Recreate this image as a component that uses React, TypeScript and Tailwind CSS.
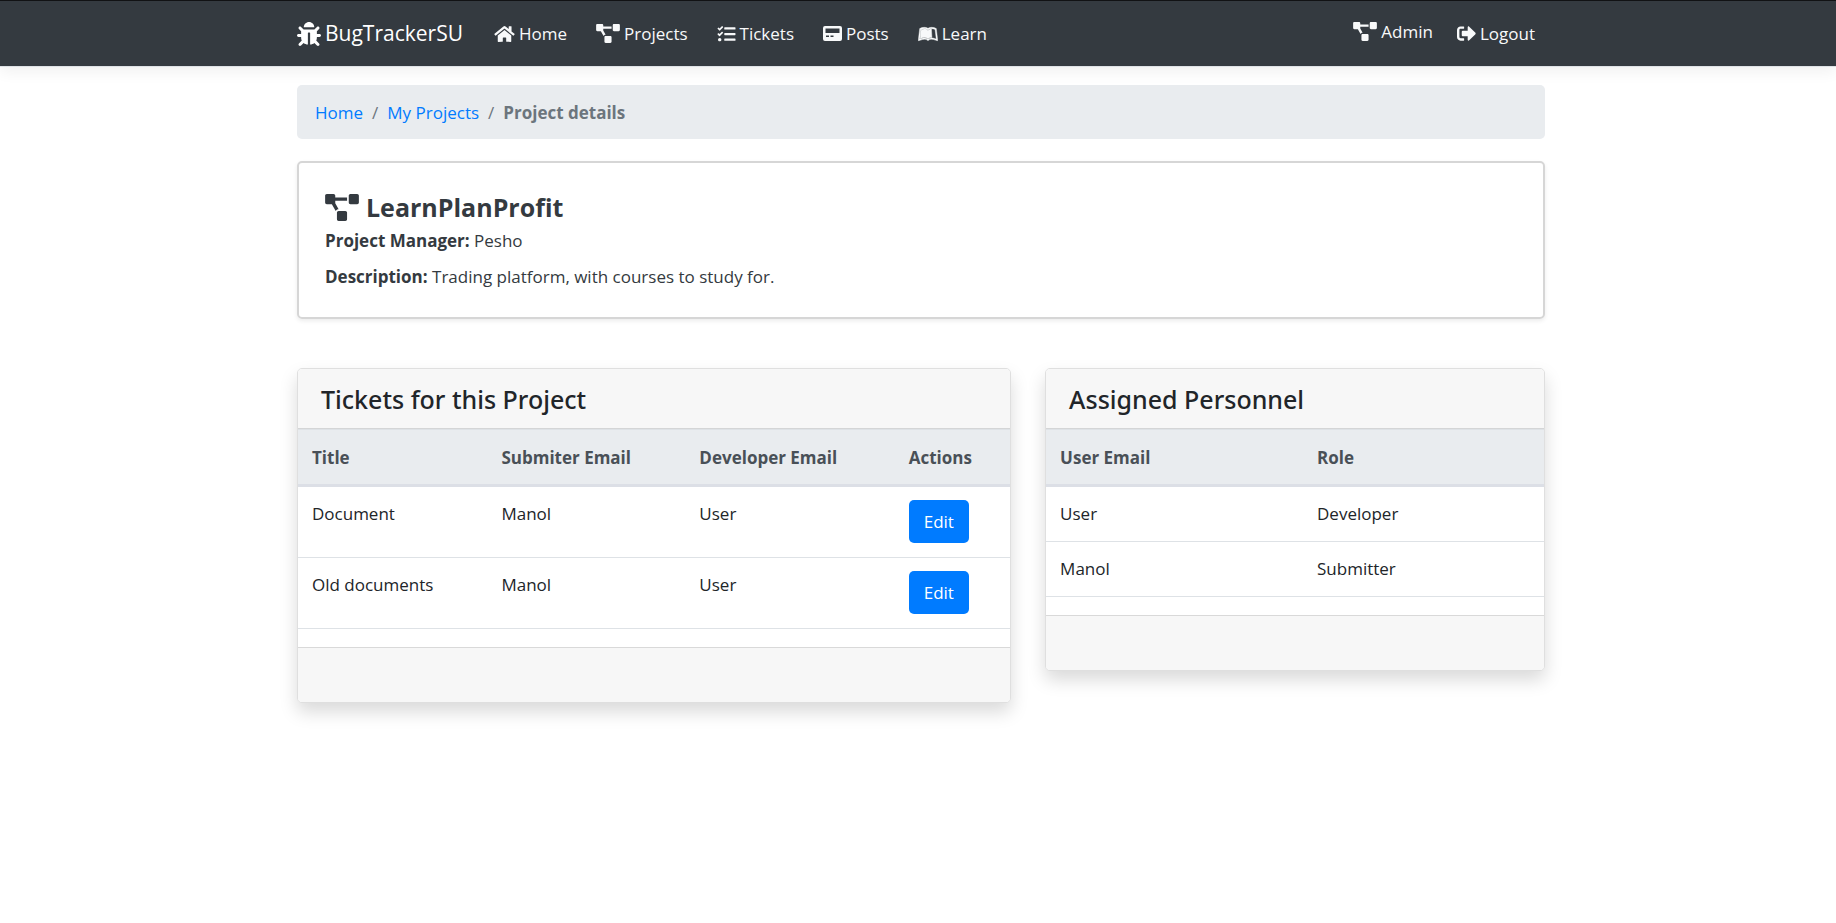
import React from "react";
import { FaBug, FaHome, FaProjectDiagram, FaTasks, FaLeanpub, FaSignOutAlt } from "react-icons/fa";

function PostsIcon() {
  return (
    <svg viewBox="0 0 19 15" className="h-[15px] w-[19px]" fill="currentColor" aria-hidden="true">
      <path
        fillRule="evenodd"
        d="M2 0h15a2 2 0 0 1 2 2v11a2 2 0 0 1-2 2H2a2 2 0 0 1-2-2V2a2 2 0 0 1 2-2zM2.5 2.5v4.5h14V2.5zM3 9.5v1.5h3V9.5zM7.5 9.5v1.5h3V9.5z"
      />
    </svg>
  );
}

const diagram = <FaProjectDiagram viewBox="0 0 640 512" className="h-[19px] w-6" />;

const links = [
  { label: "Home", icon: <FaHome className="h-[18px] w-[21px]" /> },
  { label: "Projects", icon: diagram },
  { label: "Tickets", icon: <FaTasks className="h-[18px] w-[19px]" /> },
  { label: "Posts", icon: <PostsIcon /> },
  { label: "Learn", icon: <FaLeanpub className="h-5 w-5" stroke="currentColor" strokeWidth={12} /> },
];

function NavLink({ label, icon }: { label: string; icon: React.ReactNode }) {
  return (
    <a href="#" className="flex items-center gap-1 text-[#f8f9fa]">
      {icon}
      {label}
    </a>
  );
}

const tickets = [
  { title: "Document", submitter: "Manol", developer: "User" },
  { title: "Old documents", submitter: "Manol", developer: "User" },
];

const personnel = [
  { email: "User", role: "Developer" },
  { email: "Manol", role: "Submitter" },
];

function Card({ title, children }: { title: string; children: React.ReactNode }) {
  return (
    <section className="overflow-hidden rounded-[5px] border border-[#dfdfdf] bg-white shadow-[0_9px_18px_rgba(0,0,0,0.15)]">
      <header className="border-b border-[#d4d5d6] bg-[#f7f7f7] px-[23px] pt-[14px] pb-3">
        <h2 className="font-['Noto_Sans','Open_Sans',sans-serif] text-[25px] leading-[33px] font-medium">{title}</h2>
      </header>
      {children}
      <footer className="mt-[18px] h-[55px] border-t border-[#d9d9d9] bg-[#f7f7f7]" />
    </section>
  );
}

function Th({ children, className = "" }: { children: React.ReactNode; className?: string }) {
  return (
    <th
      scope="col"
      className={`border-t border-b-3 border-[#dee2e6] border-b-[#dcdfe6] bg-[#e9ecef] px-[14px] pt-[14px] pb-[13px] text-left font-bold text-[#495057] ${className}`}
    >
      {children}
    </th>
  );
}

function Td({ children }: { children: React.ReactNode }) {
  return <td className="border-b border-[#dee2e6] px-[14px] pt-[13px] pb-[14px] align-top">{children}</td>;
}

export default function App() {
  return (
    <div className="min-h-screen bg-white font-['Open_Sans','Noto_Sans',sans-serif] text-[17px] leading-[27px] font-normal text-[#212529]">
      <nav className="border-t border-b border-t-[#111214] border-b-[#dee2e6] bg-[#343a40] pr-4 pl-[22px] shadow-[0_5px_14px_rgba(0,0,0,0.06)]">
        <div className="mx-auto flex h-[65px] max-w-[1248px] items-center pr-[10px]">
          <a href="#" className="mr-[31px] flex items-center gap-1 text-[21px] text-white">
            <FaBug className="h-6 w-6" />
            BugTrackerSU
          </a>
          <ul className="flex items-center gap-[29px]">
            {links.map((link) => (
              <li key={link.label}>
                <NavLink {...link} />
              </li>
            ))}
          </ul>
          <ul className="ml-auto flex items-center gap-6">
            <li className="pb-1">
              <NavLink label="Admin" icon={diagram} />
            </li>
            <li>
              <NavLink label="Logout" icon={<FaSignOutAlt className="h-[19px] w-[19px]" />} />
            </li>
          </ul>
        </div>
      </nav>

      <main className="pt-[18px] pr-4 pb-8 pl-[22px]">
        <div className="mx-auto max-w-[1248px]">
          <ol className="flex gap-[9px] rounded-[5px] bg-[#e9ecef] px-[18px] pt-[14px] pb-[13px] text-[#6c757d]">
            <li>
              <a href="#" className="text-[#007bff]">Home</a>
            </li>
            <li aria-hidden="true">/</li>
            <li>
              <a href="#" className="text-[#007bff]">My Projects</a>
            </li>
            <li aria-hidden="true">/</li>
            <li className="font-bold">Project details</li>
          </ol>

          <section className="mt-[22px] rounded-[5px] border-2 border-[#d6d6d6] px-[26px] pt-7 pb-[27px] text-[#343a40] shadow-[0_2px_4px_rgba(0,0,0,0.08)]">
            <h1 className="mb-1 flex items-center gap-[7px] text-[25px] leading-8 font-bold">
              <FaProjectDiagram viewBox="0 0 640 512" className="h-[27px] w-[34px]" />
              LearnPlanProfit
            </h1>
            <p className="mb-[9px]">
              <b>Project Manager:</b> Pesho
            </p>
            <p>
              <b>Description:</b> Trading platform, with courses to study for.
            </p>
          </section>

          <div className="mt-[49px] grid grid-cols-[10fr_7fr] items-start gap-[34px]">
            <Card title="Tickets for this Project">
              <table className="w-full table-fixed border-separate border-spacing-0">
                <thead>
                  <tr>
                    <Th className="w-[26.6%]">Title</Th>
                    <Th className="w-[27.8%]">Submiter Email</Th>
                    <Th className="w-[29.4%]">Developer Email</Th>
                    <Th>Actions</Th>
                  </tr>
                </thead>
                <tbody>
                  {tickets.map((t) => (
                    <tr key={t.title}>
                      <Td>{t.title}</Td>
                      <Td>{t.submitter}</Td>
                      <Td>{t.developer}</Td>
                      <Td>
                        <button type="button" className="block rounded-[5px] bg-[#007bff] px-[15px] py-2 text-white">
                          Edit
                        </button>
                      </Td>
                    </tr>
                  ))}
                </tbody>
              </table>
            </Card>

            <Card title="Assigned Personnel">
              <table className="w-full table-fixed border-separate border-spacing-0">
                <thead>
                  <tr>
                    <Th className="w-[51.6%]">User Email</Th>
                    <Th>Role</Th>
                  </tr>
                </thead>
                <tbody>
                  {personnel.map((p) => (
                    <tr key={p.email}>
                      <Td>{p.email}</Td>
                      <Td>{p.role}</Td>
                    </tr>
                  ))}
                </tbody>
              </table>
            </Card>
          </div>
        </div>
      </main>
    </div>
  );
}
